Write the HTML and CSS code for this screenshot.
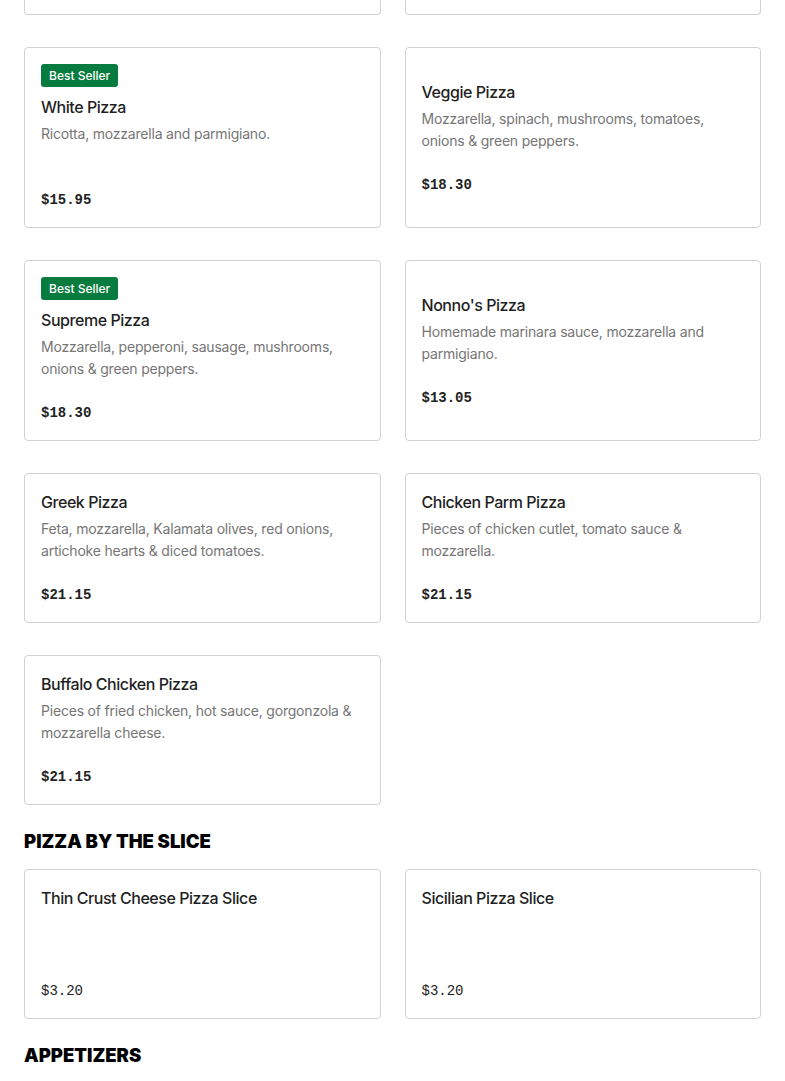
FILE: index.html
```html
<!DOCTYPE html>
<html lang="en">
<head>
<meta charset="utf-8">
<title>Menu</title>
<link rel="stylesheet" href="styles.css">
</head>
<body>
<main class="menu">
  <div class="grid">
    <div class="card cut"></div>
    <div class="card cut"></div>

    <article class="card">
      <span class="badge">Best Seller</span>
      <h3 class="title">White Pizza</h3>
      <p class="desc">Ricotta, mozzarella and parmigiano.</p>
      <p class="price">$15.95</p>
    </article>
    <article class="card">
      <h3 class="title">Veggie Pizza</h3>
      <p class="desc">Mozzarella, spinach, mushrooms, tomatoes, onions &amp; green peppers.</p>
      <p class="price">$18.30</p>
    </article>

    <article class="card">
      <span class="badge">Best Seller</span>
      <h3 class="title">Supreme Pizza</h3>
      <p class="desc">Mozzarella, pepperoni, sausage, mushrooms, onions &amp; green peppers.</p>
      <p class="price">$18.30</p>
    </article>
    <article class="card">
      <h3 class="title">Nonno's Pizza</h3>
      <p class="desc">Homemade marinara sauce, mozzarella and parmigiano.</p>
      <p class="price">$13.05</p>
    </article>

    <article class="card">
      <h3 class="title">Greek Pizza</h3>
      <p class="desc">Feta, mozzarella, Kalamata olives, red onions, artichoke hearts &amp; diced tomatoes.</p>
      <p class="price">$21.15</p>
    </article>
    <article class="card">
      <h3 class="title">Chicken Parm Pizza</h3>
      <p class="desc">Pieces of chicken cutlet, tomato sauce &amp; mozzarella.</p>
      <p class="price">$21.15</p>
    </article>

    <article class="card">
      <h3 class="title">Buffalo Chicken Pizza</h3>
      <p class="desc">Pieces of fried chicken, hot sauce, gorgonzola &amp; mozzarella cheese.</p>
      <p class="price">$21.15</p>
    </article>
  </div>

  <h2 class="section">Pizza by the Slice</h2>
  <div class="grid">
    <article class="card">
      <h3 class="title">Thin Crust Cheese Pizza Slice</h3>
      <p class="desc"></p>
      <p class="price light">$3.20</p>
    </article>
    <article class="card">
      <h3 class="title">Sicilian Pizza Slice</h3>
      <p class="desc"></p>
      <p class="price light">$3.20</p>
    </article>
  </div>

  <h2 class="section">Appetizers</h2>
</main>
</body>
</html>
```
FILE: styles.css
```css
* { box-sizing: border-box; }
html, body { margin: 0; padding: 0; background: #fff; }
body {
  font-family: Inter, "Liberation Sans", sans-serif;
  color: #1f1f1f;
}
.menu {
  padding: 0 24px;
}
.grid {
  display: grid;
  grid-template-columns: 1fr 1fr;
  column-gap: 24px;
  row-gap: 32px;
}
.card {
  border: 1px solid #d2d2d2;
  border-radius: 4px;
  padding: 16px 16px 15px;
  display: flex;
  flex-direction: column;
  justify-content: center;
  align-items: flex-start;
  min-height: 150px;
}
.card.cut {
  min-height: 0;
  height: 15px;
  border-top: 0;
  border-top-left-radius: 0;
  border-top-right-radius: 0;
  padding: 0;
}
.badge {
  display: inline-block;
  background: #087b3e;
  color: #fff;
  font-size: 12px;
  font-weight: 500;
  line-height: 23px;
  height: 23px;
  padding: 0 8px;
  border-radius: 3px;
  margin-bottom: 8px;
}
.title {
  margin: 0;
  font-size: 16px;
  font-weight: 500;
  line-height: 24px;
  letter-spacing: -0.45px;
  color: #1f1f1f;
}
.desc {
  margin: 4px 0 0;
  font-size: 14px;
  line-height: 22px;
  letter-spacing: -0.2px;
  color: #767676;
  min-height: 44px;
}
.price {
  margin: 21px 0 0;
  font-family: "Liberation Mono", "DejaVu Sans Mono", monospace;
  font-weight: 700;
  font-size: 14px;
  line-height: 24px;
  color: #222;
}
.price.light { font-weight: 400; color: #222; }
.section {
  margin: 24px 0 16px;
  font-family: Inter, "Liberation Sans", sans-serif;
  font-weight: 900;
  font-size: 18.5px;
  line-height: 24px;
  text-transform: uppercase;
  color: #000;
}
```
